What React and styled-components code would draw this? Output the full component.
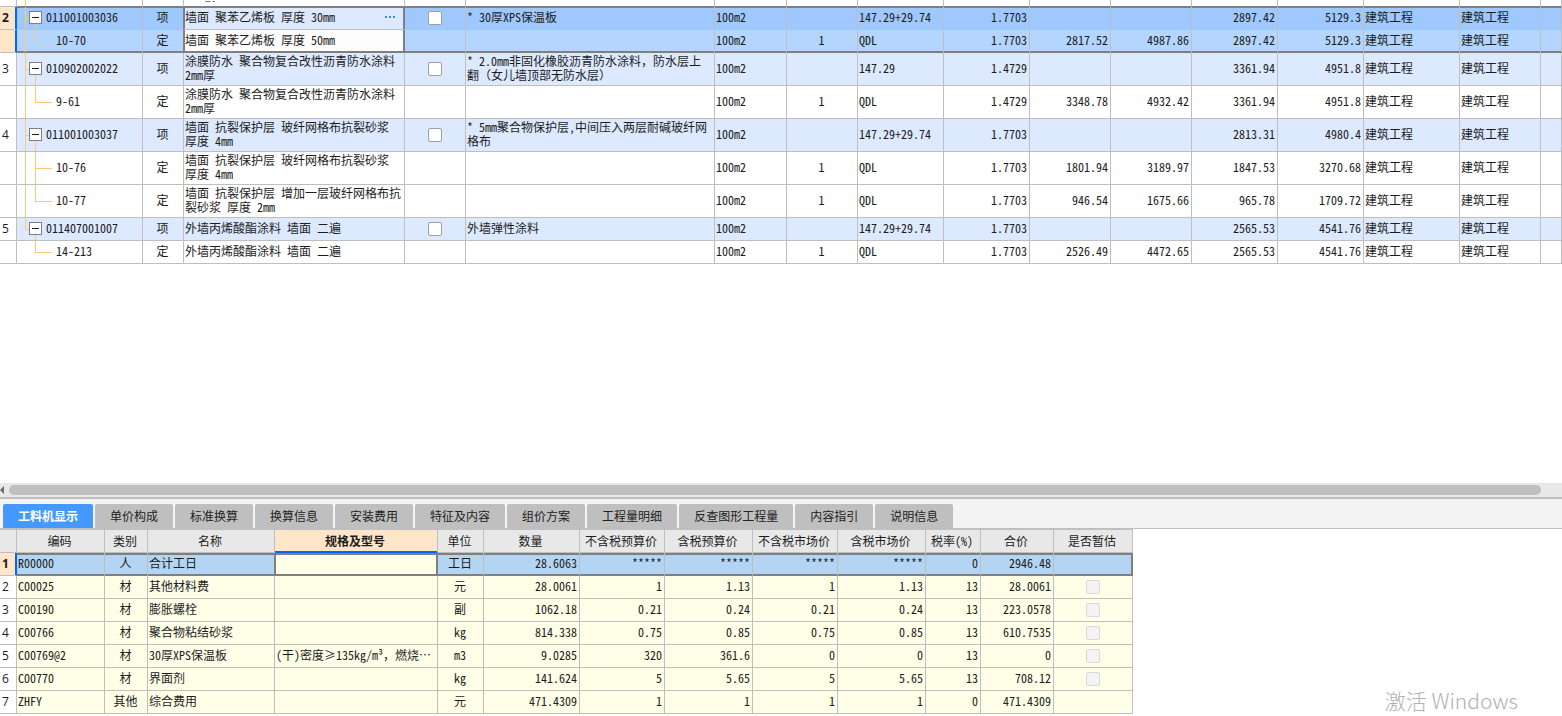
import { useState } from "react";
import styled, { createGlobalStyle, css } from "styled-components";

const line = "#bfbfbf";
const dark = "#7f7f7f";
const blue = "#0066ff";
const orange = "#ffc878";

const GlobalStyle = createGlobalStyle`
    *{
        box-sizing:border-box;
    }
    body{
        margin:0;
        background:#fff;
        color:#1c1c1c;
        font-family:"Noto Sans CJK SC",sans-serif;
        font-size:12px;
        line-height:14px;
    }
`
const Page=styled.div`
    min-height:100vh;
    display:flex;
    flex-direction:column;
    position:relative;
    overflow:hidden;
`
const TopPane=styled.main`
    flex:1;
    overflow:hidden;
`
const BottomPane=styled.section`
    padding-bottom:2px;
`
const Grid=styled.table`
    table-layout:fixed;
    border-collapse:separate;
    border-spacing:0;
    width:${p=>p.$width||"100%"};
    font-feature-settings:"hwid";
`
const Col=styled.col`
    width:${p=>p.$w?`${p.$w}px`:"auto"};
`
const Row=styled.tr`
    height:${p=>p.$h||23}px;
    background:${p=>p.$bg||"#fff"};
`
const Cell=styled.td`
    padding:0 2px 2px 1px;
    border-right:1px solid ${p=>p.$rightEdge?dark:line};
    border-bottom:1px solid ${p=>p.$edge?dark:line};
    text-align:${p=>p.$align||"left"};
    vertical-align:middle;
    white-space:${p=>p.$wrap?"normal":"nowrap"};
    overflow:hidden;
    ${p=>p.$top&&css`box-shadow:inset 0 1px ${dark};`}
    ${p=>p.$bottom&&css`box-shadow:inset 0 -1px ${dark};`}
`
const NameCell=styled(Cell)`
    padding-right:1px;
    ${p=>p.$boxed&&css`
        background:${p.$top?"#dde9fe":"#fdfdfd"};
        border-right-color:${dark};
        box-shadow:inset 1px 0 ${dark},inset -1px 0 ${dark},inset 0 ${p.$top?1:-1}px ${dark};
    `}
`
const NameLine=styled.div`
    display:flex;
    justify-content:space-between;
    align-items:center;
`
const ScrolledLine=styled.div`
    display:flex;
    align-items:flex-end;
    height:2px;
    overflow:hidden;
`
const FullWidth=styled.span`
    font-feature-settings:normal;
`
const More=styled.button`
    border:0;
    padding:0 7px;
    background:none;
    display:flex;
    svg{
        display:block;
    }
`
const RowNo=styled.th`
    padding:0 0 0 2px;
    border-right:1px solid ${line};
    border-bottom:1px solid ${line};
    background:${p=>p.$active?"#ffe6c9":"#fff"};
    font-family:"Open Sans","Noto Sans CJK SC",sans-serif;
    font-size:12px;
    font-weight:${p=>p.$active?700:400};
    text-align:left;
    ${p=>p.$active&&css`
        border-right-color:${blue};
        box-shadow:inset -1px 0 ${blue};
    `}
`
const TreeCell=styled(Cell)`
    position:relative;
    padding-left:${p=>p.$child?39:12}px;
    &::before{
        content:"";
        position:absolute;
        left:8px;
        top:0;
        bottom:${p=>p.$trunk==="end"?"50%":"-1px"};
        width:1px;
        background:${p=>p.$trunk==="none"?"transparent":orange};
    }
    &::after{
        content:"";
        position:absolute;
        left:18px;
        top:${p=>p.$child?"0":"50%"};
        bottom:${p=>p.$last?"50%":"-1px"};
        width:1px;
        background:${p=>p.$bare?"transparent":orange};
    }
`
const Branch=styled.span`
    position:absolute;
    top:50%;
    left:${p=>p.$child?18:8}px;
    width:${p=>p.$child?17:5}px;
    height:1px;
    background:${orange};
`
const Node=styled.div`
    display:flex;
    align-items:center;
    gap:4px;
`
const Toggle=styled.button`
    position:relative;
    z-index:1;
    width:13px;
    height:13px;
    padding:0;
    border:1px solid ${dark};
    background:#fff;
    display:flex;
    align-items:center;
    justify-content:center;
    &::before{
        content:"";
        width:7px;
        height:1px;
        background:#222;
    }
`
const CheckCell=styled(Cell)`
    padding:0 1px;
`
const Check=styled.input.attrs({type:"checkbox"})`
    appearance:none;
    display:block;
    width:14px;
    height:14px;
    margin:0 auto;
    border:1px solid #9f9f9f;
    border-radius:2px;
    background:#fff;
    &:checked{
        background:#4499ff;
    }
    &:disabled{
        border-color:#d9d9d9;
        background:#f3f3f3;
    }
`
const ScrollBar=styled.div`
    display:flex;
    align-items:center;
    gap:4px;
    height:14px;
    padding-right:21px;
    background:#e8e8e8;
`
const Thumb=styled.div`
    flex:1;
    height:10px;
    border-radius:5px;
    background:${line};
`
const TabBar=styled.nav`
    display:flex;
    align-items:flex-end;
    gap:2px;
    height:32px;
    padding:0 3px;
    border-top:2px solid ${line};
    border-bottom:1px solid ${line};
    background:#f4f4f4;
`
const Tab=styled.button`
    height:24px;
    padding:0 15px;
    border:0;
    border-radius:2px 2px 0 0;
    background:${p=>p.$active?"#4499ff":line};
    color:${p=>p.$active?"#fff":"#222"};
    font:inherit;
    font-weight:${p=>p.$active?700:400};
    white-space:nowrap;
`
const Head=styled.th`
    padding:0 2px 0 0;
    border-top:1px solid ${line};
    border-right:1px solid ${line};
    border-bottom:1px solid ${line};
    background:#e8e8e8;
    font-weight:400;
    ${p=>p.$active&&css`
        background:#ffe6c9;
        font-weight:700;
        border-bottom-color:${blue};
        box-shadow:inset 0 -1px ${blue};
    `}
`
const ResCell=styled(Cell)`
    ${p=>p.$picked&&css`
        border-bottom-color:${dark};
        box-shadow:inset 0 2px ${dark},inset 0 -1px ${dark}${p.$end?`,inset -1px 0 ${dark}`:""};
        ${p.$end&&`border-right-color:${dark};`}
    `}
    ${p=>p.$focus&&css`
        background:#ffffe8;
        border-right-color:${dark};
        box-shadow:inset 0 2px ${dark},inset 0 -1px ${dark},inset 1px 0 ${dark},inset -1px 0 ${dark};
    `}
    ${p=>p.$end&&css`padding:0 1px;`}
`
const Watermark=styled.div`
    position:absolute;
    right:44px;
    bottom:4px;
    color:#b0b0b0;
    font-weight:300;
    font-size:21px;
    line-height:24px;
`

const itemCols=[17,126,41,221,61,249,72,71,86,86,81,81,86,86,96,81,0]
const items=[
    {no:"2",code:"011001003036",name:"墙面 聚苯乙烯板 厚度 30mm",desc:"* 30厚XPS保温板",expr:"147.29+29.74",qty:"1.7703",price:"2897.42",total:"5129.3",picked:true,bg:"#9fc8fe"},
    {child:true,last:true,code:"10-70",name:"墙面 聚苯乙烯板 厚度 50mm",qty:"1.7703",a:"2817.52",b:"4987.86",price:"2897.42",total:"5129.3",picked:true,bg:"#b3d5fe"},
    {no:"3",h:33,code:"010902002022",name:"涂膜防水 聚合物复合改性沥青防水涂料 2mm厚",desc:"* 2.0mm非固化橡胶沥青防水涂料，防水层上翻（女儿墙顶部无防水层）",expr:"147.29",qty:"1.4729",price:"3361.94",total:"4951.8"},
    {child:true,last:true,h:33,code:"9-61",name:"涂膜防水 聚合物复合改性沥青防水涂料 2mm厚",qty:"1.4729",a:"3348.78",b:"4932.42",price:"3361.94",total:"4951.8"},
    {no:"4",h:33,code:"011001003037",name:"墙面 抗裂保护层 玻纤网格布抗裂砂浆 厚度 4mm",desc:"* 5mm聚合物保护层,中间压入两层耐碱玻纤网格布",expr:"147.29+29.74",qty:"1.7703",price:"2813.31",total:"4980.4"},
    {child:true,h:33,code:"10-76",name:"墙面 抗裂保护层 玻纤网格布抗裂砂浆 厚度 4mm",qty:"1.7703",a:"1801.94",b:"3189.97",price:"1847.53",total:"3270.68"},
    {child:true,last:true,h:33,code:"10-77",name:"墙面 抗裂保护层 增加一层玻纤网格布抗裂砂浆 厚度 2mm",qty:"1.7703",a:"946.54",b:"1675.66",price:"965.78",total:"1709.72"},
    {no:"5",trunk:"end",code:"011407001007",name:"外墙丙烯酸酯涂料 墙面 二遍",desc:"外墙弹性涂料",expr:"147.29+29.74",qty:"1.7703",price:"2565.53",total:"4541.76"},
    {child:true,last:true,trunk:"none",code:"14-213",name:"外墙丙烯酸酯涂料 墙面 二遍",qty:"1.7703",a:"2526.49",b:"4472.65",price:"2565.53",total:"4541.76"},
]

const tabs=["工料机显示","单价构成","标准换算","换算信息","安装费用","特征及内容","组价方案","工程量明细","反查图形工程量","内容指引","说明信息"]

const resCols=[17,88,43,127,163,46,96,85,88,85,88,55,73,79]
const resHeads=["编码","类别","名称","规格及型号","单位","数量","不含税预算价","含税预算价","不含税市场价","含税市场价","税率(%)","合价","是否暂估"]
const resAlign=["left","center","left","left","center","right","right","right","right","right","right","right"]
const resources=[
    ["R00000","人","合计工日","","工日","28.6063","*****","*****","*****","*****","0","2946.48"],
    ["C00025","材","其他材料费","","元","28.0061","1","1.13","1","1.13","13","28.0061"],
    ["C00190","材","膨胀螺栓","","副","1062.18","0.21","0.24","0.21","0.24","13","223.0578"],
    ["C00766","材","聚合物粘结砂浆","","kg","814.338","0.75","0.85","0.75","0.85","13","610.7535"],
    ["C00769@2","材","30厚XPS保温板","(干)密度≥135kg/m³，燃烧…","m3","9.0285","320","361.6","0","0","13","0"],
    ["C00770","材","界面剂","","kg","141.624","5","5.65","5","5.65","13","708.12"],
    ["ZHFY","其他","综合费用","","元","471.4309","1","1","1","1","0","471.4309"],
]

// hwid also narrows Chinese punctuation, so those marks keep the normal form
function Text({children=""}){
    return children.split(/([，（）])/).map((part,i)=>i%2?<FullWidth key={i}>{part}</FullWidth>:part)
}

function ItemRow({item}){
    const {child,picked}=item
    const edges={$top:picked&&!child,$bottom:picked&&child,$edge:picked&&child}
    return(
        <Row $h={item.h} $bg={item.bg||(child?"#fff":"#dde9fe")}>
            <RowNo scope="row" $active={picked}>{item.no}</RowNo>
            <TreeCell {...edges} $child={child} $last={item.last} $trunk={item.trunk}>
                <Branch $child={child}/>
                <Node>
                    {!child&&<Toggle aria-label={item.code}/>}
                    {item.code}
                </Node>
            </TreeCell>
            <Cell {...edges} $align="center" $rightEdge={picked}>{child?"定":"项"}</Cell>
            <NameCell {...edges} $wrap $boxed={picked}>
                <NameLine>
                    {item.name}
                    {picked&&!child&&
                        <More aria-label="更多">
                            <svg width="11" height="2" fill="#3d8fd1">
                                <rect x="0" width="2" height="2"/>
                                <rect x="4" width="2" height="2"/>
                                <rect x="8" width="2" height="2"/>
                            </svg>
                        </More>}
                </NameLine>
            </NameCell>
            <CheckCell {...edges}>{!child&&<Check aria-label={item.name}/>}</CheckCell>
            <Cell {...edges} $wrap><Text>{item.desc}</Text></Cell>
            <Cell {...edges}>100m2</Cell>
            <Cell {...edges} $align="center">{child&&"1"}</Cell>
            <Cell {...edges}>{child?"QDL":item.expr}</Cell>
            <Cell {...edges} $align="right">{item.qty}</Cell>
            <Cell {...edges} $align="right">{item.a}</Cell>
            <Cell {...edges} $align="right">{item.b}</Cell>
            <Cell {...edges} $align="right">{item.price}</Cell>
            <Cell {...edges} $align="right">{item.total}</Cell>
            <Cell {...edges}>建筑工程</Cell>
            <Cell {...edges}>建筑工程</Cell>
            <Cell {...edges}/>
        </Row>
    )
}

function App(){
    const [tab,tabSet]=useState(tabs[0])
    return(
        <Page>
            <GlobalStyle/>
            <TopPane>
                <Grid>
                    <colgroup>{itemCols.map((w,i)=><Col key={i} $w={w}/>)}</colgroup>
                    <tbody>
                        <Row $h={7}>
                            <RowNo/>
                            <TreeCell $edge $bare/>
                            <Cell $edge/>
                            <Cell $edge><ScrolledLine>2mm板.</ScrolledLine></Cell>
                            {itemCols.slice(4).map((w,i)=><Cell key={i} $edge/>)}
                        </Row>
                        {items.map(item=><ItemRow key={item.code} item={item}/>)}
                    </tbody>
                </Grid>
            </TopPane>
            <BottomPane>
                <ScrollBar>
                    <svg width="5" height="8" fill="#6b6b6b"><path d="M4 0v8L0 4z"/></svg>
                    <Thumb/>
                </ScrollBar>
                <TabBar>
                    {tabs.map(t=><Tab key={t} $active={t===tab} onClick={()=>{tabSet(t)}}>{t}</Tab>)}
                </TabBar>
                <Grid $width="1133px">
                    <colgroup>{resCols.map((w,i)=><Col key={i} $w={w}/>)}</colgroup>
                    <thead>
                        <Row $h={24}>
                            <Head/>
                            {resHeads.map(h=><Head key={h} $active={h==="规格及型号"}>{h}</Head>)}
                        </Row>
                    </thead>
                    <tbody>
                        {resources.map((r,i)=>(
                            <Row key={r[0]} $bg={i===0?"#b3d5f3":"#ffffe8"}>
                                <RowNo scope="row" $active={i===0}>{i+1}</RowNo>
                                {r.map((v,j)=>(
                                    <ResCell key={j} $align={resAlign[j]} $picked={i===0} $focus={i===0&&j===3} $rightEdge={i===0&&j===2}>
                                        <Text>{v}</Text>
                                    </ResCell>
                                ))}
                                <ResCell $picked={i===0} $end>
                                    {i>0&&i<6&&<Check disabled aria-label={r[2]}/>}
                                </ResCell>
                            </Row>
                        ))}
                    </tbody>
                </Grid>
            </BottomPane>
            <Watermark>激活 Windows</Watermark>
        </Page>
    )
}
export default App;
